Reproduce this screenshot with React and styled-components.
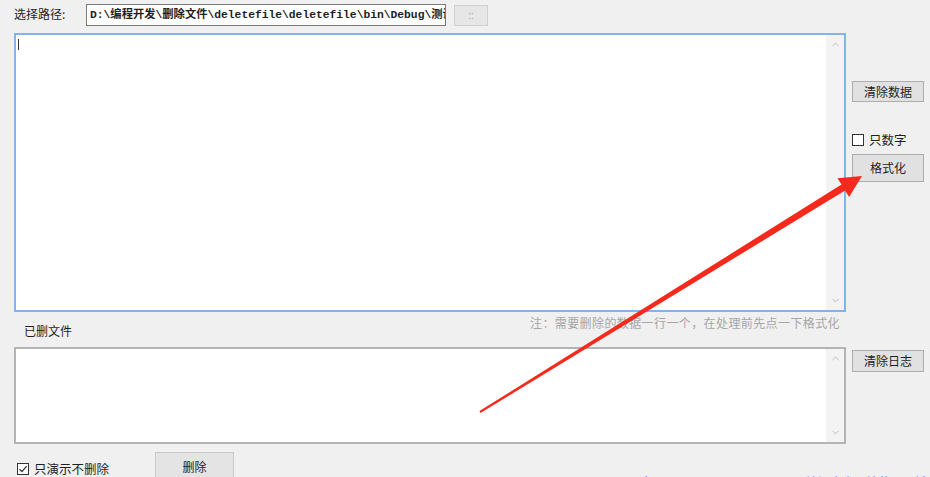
import styled, { createGlobalStyle } from "styled-components";
import { ChevronUp, ChevronDown } from "lucide-react";

const GlobalStyle = createGlobalStyle`
  html, body {
    margin: 0;
    padding: 0;
    background: #f0f0f0;
  }
  * {
    box-sizing: border-box;
  }
`;

const ui = `"Noto Sans CJK SC", "Noto Sans", sans-serif`;

export default function App() {
  return (
    <>
      <GlobalStyle />
      <Window>
        <TopBar>
          <Label>选择路径:</Label>
          <PathInput>D:\编程开发\删除文件\deletefile\deletefile\bin\Debug\测试</PathInput>
          <BrowseButton>::</BrowseButton>
        </TopBar>

        <PanelRow>
          <TextBox $focused $height={279}>
            <Caret />
            <Scrollbar>
              <ChevronUp size={11} strokeWidth={2} />
              <ChevronDown size={11} strokeWidth={2} />
            </Scrollbar>
          </TextBox>
          <SideColumn $top={48}>
            <Button $height={21}>清除数据</Button>
            <CheckRow $top={31}>
              <Box />
              <CheckText>只数字</CheckText>
            </CheckRow>
            <Button $height={28} $top={8}>格式化</Button>
          </SideColumn>
        </PanelRow>

        <CaptionRow>
          <Caption>已删文件</Caption>
          <Note>注：需要删除的数据一行一个，在处理前先点一下格式化</Note>
        </CaptionRow>

        <PanelRow>
          <TextBox $height={97}>
            <Scrollbar>
              <ChevronUp size={11} strokeWidth={2} />
              <ChevronDown size={11} strokeWidth={2} />
            </Scrollbar>
          </TextBox>
          <SideColumn $top={3}>
            <Button $height={22}>清除日志</Button>
          </SideColumn>
        </PanelRow>

        <BottomRow>
          <CheckRow $top={18} $left={3}>
            <Box>
              <svg width="10" height="10" viewBox="0 0 10 10">
                <path d="M1.5 5.2 L4 7.6 L8.6 2.2" fill="none" stroke="#333" strokeWidth="1.3" />
              </svg>
            </Box>
            <CheckText>只演示不删除</CheckText>
          </CheckRow>
          <DeleteButton>删除</DeleteButton>
          <FooterLink>更多工具：www.deletefile.net　访问官方网站获取更新</FooterLink>
        </BottomRow>

        <Arrow viewBox="0 0 930 477">
          <polygon
            points="479.5,411.1 841.5,184.6 837.5,178.2 862,176 849.1,197 845.1,190.6 480.5,412.9"
            fill="#f52a1c"
          />
        </Arrow>
      </Window>
    </>
  );
}

const Window = styled.div`
  position: relative;
  width: 930px;
  height: 477px;
  overflow: hidden;
  padding-left: 14px;
  display: flex;
  flex-direction: column;
  background: #f0f0f0;
  font-family: ${ui};
  font-size: 12px;
  color: #1e1e1e;
`;

const TopBar = styled.div`
  height: 33px;
  display: flex;
  align-items: flex-start;
  padding-top: 4px;
`;

const Label = styled.div`
  width: 72px;
  margin-top: 2px;
  line-height: 16px;
`;

const PathInput = styled.div`
  width: 360px;
  height: 22px;
  padding: 0 3px;
  border: 1px solid #7a7a7a;
  background: #fff;
  font-family: "Liberation Mono", "Noto Sans CJK SC", monospace;
  font-size: 11.3px;
  font-weight: bold;
  line-height: 20px;
  white-space: nowrap;
  overflow: hidden;
`;

const BrowseButton = styled.div`
  width: 34px;
  height: 21px;
  margin: 1px 0 0 8px;
  border: 1px solid #cfcfcf;
  background: #e6e6e6;
  color: #9a9a9a;
  font-family: "Liberation Sans", sans-serif;
  font-size: 10px;
  line-height: 19px;
  text-align: center;
`;

const PanelRow = styled.div`
  display: flex;
  gap: 6px;
`;

const TextBox = styled.div`
  position: relative;
  width: 832px;
  height: ${(p) => p.$height}px;
  background: #fff;
  border: 2px solid ${(p) => (p.$focused ? "#7fb5ea" : "#b4b4b4")};
  display: flex;
  justify-content: flex-end;
`;

const Caret = styled.div`
  position: absolute;
  left: 2px;
  top: 4px;
  width: 1px;
  height: 11px;
  background: #333;
`;

const Scrollbar = styled.div`
  width: 18px;
  height: 100%;
  background: #f3f3f3;
  display: flex;
  flex-direction: column;
  justify-content: space-between;
  align-items: center;
  padding: 4px 0;
  color: #b8b8b8;
`;

const SideColumn = styled.div`
  width: 72px;
  padding-top: ${(p) => p.$top}px;
  display: flex;
  flex-direction: column;
`;

const Button = styled.div`
  height: ${(p) => p.$height}px;
  margin-top: ${(p) => p.$top || 0}px;
  border: 1px solid #adadad;
  background: #e1e1e1;
  text-align: center;
  line-height: ${(p) => p.$height - 2}px;
  color: #1e1e1e;
`;

const CheckRow = styled.div`
  display: flex;
  align-items: center;
  gap: 5px;
  margin-top: ${(p) => p.$top}px;
  margin-left: ${(p) => p.$left || 0}px;
  height: 13px;
`;

const Box = styled.div`
  width: 12px;
  height: 12px;
  border: 1px solid #333;
  background: #fff;
  display: flex;
  align-items: center;
  justify-content: center;
`;

const CheckText = styled.span`
  line-height: 14px;
  font-size: 12.5px;
`;

const CaptionRow = styled.div`
  width: 832px;
  height: 35px;
  display: flex;
  justify-content: space-between;
`;

const Caption = styled.div`
  align-self: flex-end;
  margin: 0 0 9px 10px;
  line-height: 14px;
`;

const Note = styled.div`
  margin: 3px 6px 0 0;
  line-height: 16px;
  color: #a6a6a6;
  letter-spacing: 0.4px;
`;

const BottomRow = styled.div`
  height: 33px;
  display: flex;
  align-items: flex-start;
`;

const DeleteButton = styled.div`
  width: 79px;
  height: 32px;
  margin: 8px 0 0 46px;
  border: 1px solid #c8c8c8;
  background: #e4e4e4;
  text-align: center;
  line-height: 28px;
`;

const FooterLink = styled.div`
  margin: 30px 0 0 auto;
  padding-right: 4px;
  color: #6a6aff;
  white-space: nowrap;
  line-height: 16px;
  font-size: 12px;
`;

const Arrow = styled.svg`
  position: absolute;
  left: 0;
  top: 0;
  width: 930px;
  height: 477px;
  pointer-events: none;
`;
